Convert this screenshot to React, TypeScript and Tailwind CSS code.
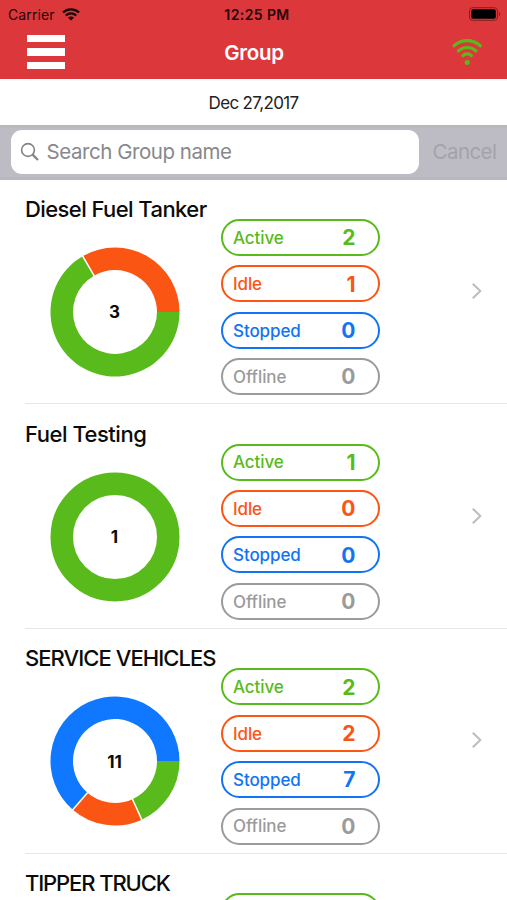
type Status = 'active' | 'idle' | 'stopped' | 'offline'

interface Group {
  name: string
  tracking: string
  counts?: Record<Status, number>
}

const groups: Group[] = [
  { name: 'Diesel Fuel Tanker', tracking: 'tracking-[-0.58px]', counts: { active: 2, idle: 1, stopped: 0, offline: 0 } },
  { name: 'Fuel Testing', tracking: 'tracking-[-0.48px]', counts: { active: 1, idle: 0, stopped: 0, offline: 0 } },
  { name: 'SERVICE VEHICLES', tracking: 'tracking-[-0.93px]', counts: { active: 2, idle: 2, stopped: 7, offline: 0 } },
  { name: 'TIPPER TRUCK', tracking: 'tracking-[-1.12px]' },
]

const statuses: { key: Status; label: string; pill: string; color: string }[] = [
  { key: 'active', label: 'Active', pill: 'border-[#58bb1b] text-[#58bb1b]', color: '#58bb1b' },
  { key: 'idle', label: 'Idle', pill: 'border-[#fb5514] text-[#fb5514]', color: '#fb5514' },
  { key: 'stopped', label: 'Stopped', pill: 'border-[#1274f5] text-[#1274f5]', color: '#0f78ff' },
  { key: 'offline', label: 'Offline', pill: 'border-[#9b9b9b] text-[#9b9b9b]', color: '#9b9b9b' },
]

const OUTER = 64.5
const INNER = 42

function point(radius: number, turn: number) {
  const angle = turn * Math.PI * 2
  return `${(radius * Math.cos(angle)).toFixed(3)} ${(radius * Math.sin(angle)).toFixed(3)}`
}

function slicePath(from: number, to: number) {
  const large = to - from > 0.5 ? 1 : 0
  return `M${point(OUTER, from)} A${OUTER} ${OUTER} 0 ${large} 1 ${point(OUTER, to)} L${point(INNER, to)} A${INNER} ${INNER} 0 ${large} 0 ${point(INNER, from)} Z`
}

function Donut({ counts }: { counts: Record<Status, number> }) {
  const total = statuses.reduce((sum, s) => sum + counts[s.key], 0)
  const used = statuses.filter((s) => counts[s.key] > 0)
  let start = 0
  const slices = used.map((s) => {
    const from = start
    start += counts[s.key] / total
    return { color: s.color, from, to: start }
  })

  return (
    <div className="grid size-[130px] place-items-center">
      <svg viewBox="-65 -65 130 130" className="col-start-1 row-start-1 size-full">
        {slices.length === 1 ? (
          <circle r={(OUTER + INNER) / 2} fill="none" stroke={slices[0].color} strokeWidth={OUTER - INNER} />
        ) : (
          slices.map((s) => <path key={s.color} d={slicePath(s.from, s.to)} fill={s.color} />)
        )}
        {slices.slice(0, -1).map((s) => (
          <path key={s.to} d={`M${point(INNER - 1, s.to)} L${point(OUTER + 1, s.to)}`} stroke="#fff" strokeWidth="1.5" />
        ))}
      </svg>
      <span className="z-10 col-start-1 row-start-1 pt-0.5 text-[17px] leading-none font-bold">{total}</span>
    </div>
  )
}

function GroupRow({ group }: { group: Group }) {
  const { name, tracking, counts } = group

  return (
    <li className="ml-[25px] flex h-[224.7px] shrink-0 border-b-[1.5px] border-[#e6e6e8]">
      <div className="w-[195.5px] shrink-0">
        <h2 className={`mt-[15.4px] h-7 text-[22px] leading-7 font-medium whitespace-nowrap ${tracking}`}>{name}</h2>
        <div className="mt-[24.1px] ml-[24.5px]">{counts && <Donut counts={counts} />}</div>
      </div>
      <ul className="mt-[39.5px] flex w-[159.5px] shrink-0 flex-col gap-[9.4px]">
        {statuses.map((s) => (
          <li
            key={s.key}
            className={`flex h-[37px] items-center justify-between rounded-full border-2 pr-[22.5px] pl-[10.5px] ${s.pill}`}
          >
            {counts && (
              <>
                <span className="pt-0.5 text-[17px] font-medium tracking-[-0.1px]">{s.label}</span>
                <span className="pt-px text-[21px] font-bold">{counts[s.key]}</span>
              </>
            )}
          </li>
        ))}
      </ul>
      <svg
        viewBox="0 0 12 18"
        className="mt-[102.4px] ml-[91px] h-[18px] w-3"
        fill="none"
        stroke="#bcbcc0"
        strokeWidth="2"
      >
        <path d="M1.8 1.8 L9.3 9 L1.8 16.2" />
      </svg>
    </li>
  )
}

function StatusBar() {
  return (
    <div className="grid h-7 grid-cols-3 items-center text-[#240608]">
      <div className="flex items-center gap-[7px] pl-2">
        <span className="text-[14px] tracking-[0.1px]">Carrier</span>
        <svg viewBox="0 0 18 13" className="h-[13px] w-[18px]" fill="none" stroke="#160303" strokeWidth="2.3">
          <path d="M1 4.5 C5.4 0.3 12.6 0.3 17 4.5" />
          <path d="M3.8 7.5 C6.7 4.7 11.3 4.7 14.2 7.5" />
          <path d="M6 9.6 C7.7 8 10.3 8 12 9.6 L9 12.6 Z" fill="#160303" stroke="none" />
        </svg>
      </div>
      <span className="pl-[7px] text-center text-[14px] font-semibold tracking-[0.4px] whitespace-nowrap">12:25 PM</span>
      <svg viewBox="0 0 32 14" className="mr-[6px] h-[14px] w-8 justify-self-end">
        <rect x="0.5" y="0.7" width="28" height="12.6" rx="3.2" fill="none" stroke="#7f2022" />
        <rect x="2.3" y="2.3" width="24.5" height="9.4" rx="1.8" fill="#000" />
        <path d="M30 4.8 C31.6 5.5 31.6 8.5 30 9.2 Z" fill="#7f2022" />
      </svg>
    </div>
  )
}

function NavBar() {
  return (
    <div className="grid h-[51px] grid-cols-3 items-start">
      <div className="mt-[6.5px] ml-[27px] flex w-[37.5px] flex-col gap-[6px]">
        <span className="h-[7.5px] bg-white" />
        <span className="h-[7.5px] bg-white" />
        <span className="h-[7.5px] bg-white" />
      </div>
      <h1 className="mt-[11px] pl-px text-center text-[20.5px] leading-7 font-semibold tracking-[-0.3px] text-white">
        Group
      </h1>
      <svg
        viewBox="0 0 32 28"
        className="mt-[10px] mr-6 h-7 w-8 justify-self-end"
        fill="none"
        stroke="#58bb1b"
        strokeWidth="3.1"
        strokeLinecap="round"
      >
        <path d="M3 7.8 C10.2 0.9 22.2 0.9 29.4 7.8" />
        <path d="M7.4 12.9 C12.2 8.4 20.2 8.4 25 12.9" />
        <path d="M12 17.7 C14.4 15.3 18 15.3 20.4 17.7" />
        <circle cx="16.2" cy="24.4" r="2.5" fill="#58bb1b" stroke="none" />
      </svg>
    </div>
  )
}

function SearchBar() {
  return (
    <div className="flex h-[54.5px] shrink-0 items-center border-y-[3px] border-[#b9b9bb] bg-[#bdbcc4] pl-[10.5px]">
      <div className="flex h-[44px] w-[408.5px] items-center rounded-[11px] bg-white pl-[9px]">
        <svg viewBox="0 0 20 20" className="size-5" fill="none" stroke="#838388" strokeWidth="1.6">
          <circle cx="8" cy="8" r="6.4" />
          <path d="M12.6 12.6 L18 18" strokeWidth="2.2" />
        </svg>
        <span className="ml-[7px] text-[20.5px] tracking-[-0.45px] text-[#88888c]">Search Group name</span>
      </div>
      <span className="ml-[13.5px] text-[20.5px] tracking-[-0.55px] text-[#a3a2aa]">Cancel</span>
    </div>
  )
}

export default function App() {
  return (
    <main className="flex h-[900px] w-[507px] flex-col overflow-hidden bg-white font-['Inter',sans-serif] text-[#0b0b0b]">
      <header className="h-[79px] shrink-0 bg-[#dc373b]">
        <StatusBar />
        <NavBar />
      </header>
      <p className="h-[46px] shrink-0 text-center text-[17px] leading-[48px] tracking-[-0.65px] text-[#222]">Dec 27,2017</p>
      <SearchBar />
      <ul className="flex flex-col">
        {groups.map((group) => (
          <GroupRow key={group.name} group={group} />
        ))}
      </ul>
    </main>
  )
}
